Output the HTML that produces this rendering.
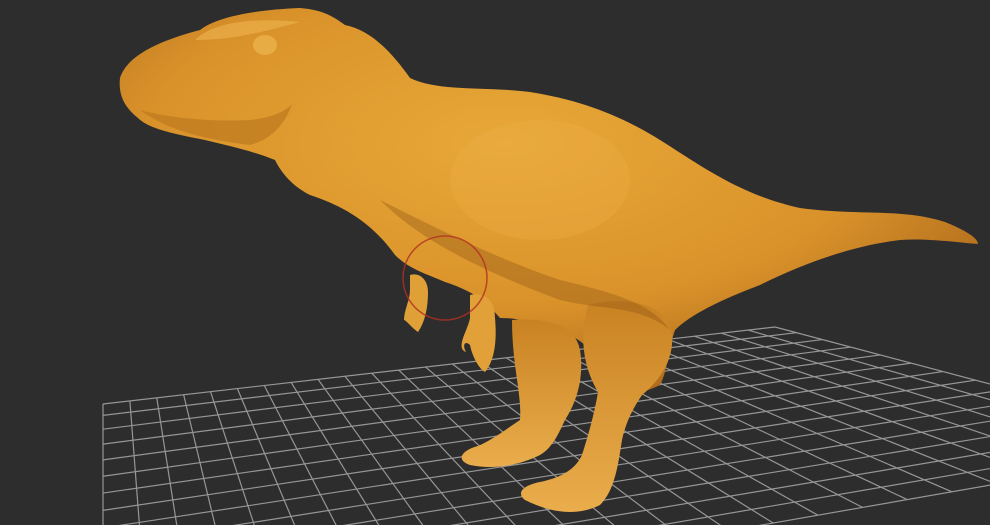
<!DOCTYPE html>
<html><head><meta charset="utf-8"><style>
html,body{margin:0;padding:0;background:#2d2d2e;width:990px;height:525px;overflow:hidden}
svg{display:block;position:absolute;left:0;top:0}
</style></head><body>
<svg id="s" width="990" height="525" viewBox="0 0 990 525" xmlns="http://www.w3.org/2000/svg">
<defs>
<radialGradient id="body" cx="0.45" cy="0.35" r="0.7">
<stop offset="0" stop-color="#e8a838"/>
<stop offset="0.6" stop-color="#d9922a"/>
<stop offset="1" stop-color="#a8641a"/>
</radialGradient>
<linearGradient id="leg" x1="0" y1="0" x2="0" y2="1">
<stop offset="0" stop-color="#c98222"/>
<stop offset="1" stop-color="#eaad4c"/>
</linearGradient>
</defs>
<rect width="990" height="525" fill="#2d2d2e"/>
<g id="grid" stroke="#a9a9a9" stroke-width="1.2" opacity="0.85"></g>
<path fill="url(#body)" d="M120,78 C128,52 170,38 200,30 C215,18 250,10 300,8 C325,10 335,18 345,25 C370,30 390,50 410,78 C440,92 480,86 530,92 C580,100 620,115 660,140 C700,165 740,195 800,208 C860,216 900,208 945,222 C965,230 978,238 978,244 C960,243 930,238 900,240 C850,246 800,265 760,285 C720,300 690,315 675,330 C668,350 668,370 660,385 C640,395 625,395 605,395 C592,390 588,370 585,345 C570,332 555,330 545,332 C530,320 515,318 500,318 C485,300 470,290 445,282 C430,275 410,270 395,255 C370,220 340,205 310,195 C290,185 280,170 275,160 C250,150 225,145 205,140 C180,135 150,130 138,118 C125,108 118,95 120,78 Z"/>
<path fill="url(#leg)" d="M512,320 C540,318 575,322 580,350 C584,375 578,400 565,420 C558,435 552,448 540,455 C520,465 495,470 470,465 C455,460 462,450 478,446 C492,440 505,430 520,420 C522,395 512,365 512,320 Z"/>
<path fill="url(#leg)" d="M588,305 C630,295 668,305 672,335 C674,360 660,380 642,395 C632,410 626,422 622,440 C618,465 615,490 600,505 C580,515 555,515 525,500 C515,492 525,485 540,482 C560,478 575,470 582,455 C590,430 595,410 598,392 C585,370 578,340 588,305 Z"/>
<path fill="#e2a038" d="M470,295 C485,292 495,300 495,318 C497,340 495,360 485,372 C478,368 472,355 470,345 C465,340 462,345 466,352 C455,348 468,330 470,318 Z"/>
<path fill="#e0a038" d="M410,275 C420,272 428,280 428,292 C428,308 425,322 418,332 C412,328 406,320 404,320 C404,310 410,300 410,290 Z"/>
<path fill="#b8741c" opacity="0.6" d="M140,110 C170,118 210,122 250,120 C270,118 285,112 292,104 C285,125 270,140 250,145 C210,140 170,132 140,110 Z"/>
<path fill="#eeb450" opacity="0.6" d="M195,40 C215,20 260,18 300,22 C270,30 235,40 195,40 Z"/>
<ellipse cx="265" cy="45" rx="12" ry="10" fill="#e8ac44"/>
<ellipse cx="540" cy="180" rx="90" ry="60" fill="#eeb048" opacity="0.3"/>
<path fill="#8a5014" opacity="0.35" d="M380,200 C420,240 480,270 560,300 C600,310 640,305 670,330 C650,300 600,290 560,280 C500,260 440,230 380,200 Z"/>
<circle cx="445" cy="278" r="42" fill="none" stroke="#b03020" stroke-width="1.5" opacity="0.8"/>
</svg>
<script>
(function(){
var g=document.getElementById('grid');
var P00=[103,404],P10=[775,327],P01=[103,640],P11=[1220,445];
function pt(u,v){return [P00[0]*(1-u)*(1-v)+P10[0]*u*(1-v)+P01[0]*(1-u)*v+P11[0]*u*v,
P00[1]*(1-u)*(1-v)+P10[1]*u*(1-v)+P01[1]*(1-u)*v+P11[1]*u*v];}
var NU=25,NV=14,h='';
function vp(t){return Math.pow(t,1.15);}
for(var i=0;i<=NU;i++){var u=i/NU,a=pt(u,0),b=pt(u,1);h+='<line x1="'+a[0]+'" y1="'+a[1]+'" x2="'+b[0]+'" y2="'+b[1]+'"/>';}
for(var j=0;j<=NV;j++){var v=vp(j/NV),a=pt(0,v),b=pt(1,v);h+='<line x1="'+a[0]+'" y1="'+a[1]+'" x2="'+b[0]+'" y2="'+b[1]+'"/>';}
g.innerHTML=h;
})();
</script>
</body></html>
